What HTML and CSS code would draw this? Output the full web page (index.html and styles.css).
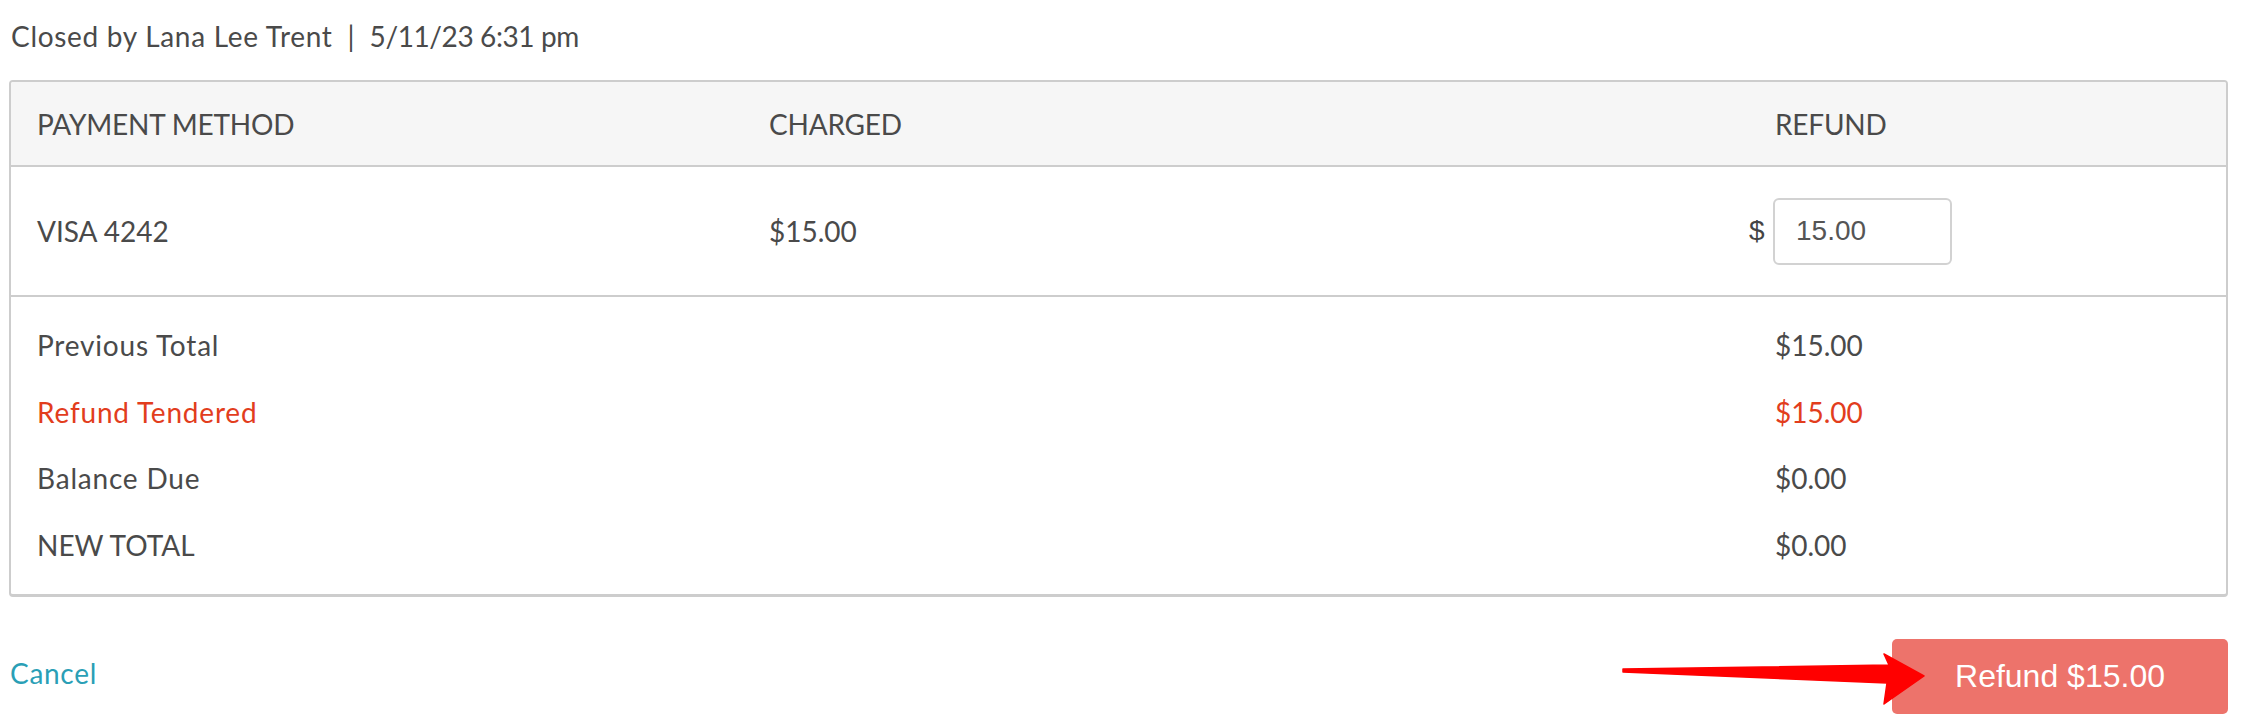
FILE: index.html
```html
<!DOCTYPE html>
<html lang="en">
<head>
<meta charset="utf-8">
<title>Refund</title>
<link rel="stylesheet" href="styles.css">
</head>
<body>
<div class="page">
  <p class="closed"><span class="who">Closed by Lana Lee Trent</span><span class="sep">|</span><span class="when">5/11/23 6:31 pm</span></p>

  <div class="panel">
    <div class="row head">
      <div class="cell">PAYMENT METHOD</div>
      <div class="cell">CHARGED</div>
      <div class="cell">REFUND</div>
    </div>
    <div class="row method">
      <div class="cell">VISA 4242</div>
      <div class="cell">$15.00</div>
      <div class="cell refund-cell">
        <span class="dollar">$</span>
        <input class="amount" type="text" value="15.00">
      </div>
    </div>
    <div class="totals">
      <div class="total-row"><span class="label">Previous Total</span><span class="value">$15.00</span></div>
      <div class="total-row red"><span class="label">Refund Tendered</span><span class="value">$15.00</span></div>
      <div class="total-row"><span class="label">Balance Due</span><span class="value">$0.00</span></div>
      <div class="total-row"><span class="label caps">NEW TOTAL</span><span class="value">$0.00</span></div>
    </div>
  </div>

  <div class="footer">
    <a class="cancel" href="#">Cancel</a>
    <button class="refund-btn" type="button">Refund $15.00</button>
  </div>
</div>

<svg class="arrow" width="310" height="60" viewBox="0 0 310 60" aria-hidden="true">
  <path d="M3,19 L269,15 L264,4 L304,26 L264,54 L267,33 L3,22 Z" fill="#ff0000" stroke="#ff0000" stroke-width="1.5" stroke-linejoin="round"/>
</svg>
</body>
</html>
```

FILE: styles.css
```css
html, body {
  margin: 0;
  padding: 0;
  background: #ffffff;
}

body {
  font-family: Lato, "Open Sans", "Noto Sans", sans-serif;
  color: #4a4a4a;
  font-size: 28px;
}

.page {
  margin: 0 14px 0 9px;
}

.closed {
  margin: 0;
  padding: 16px 0 0 2px;
  height: 64px;
  line-height: 40px;
  font-size: 28px;
  color: #4a4a4a;
}

.who {
  letter-spacing: 0.7px;
}

.when {
  letter-spacing: -0.4px;
}

.sep {
  margin: 0 15px;
}

.panel {
  border: 2px solid #cdcdcd;
  border-bottom-width: 3px;
  border-radius: 4px;
  overflow: hidden;
}

.row {
  display: grid;
  grid-template-columns: 732px 1006px 1fr;
  padding-left: 26px;
  align-items: center;
}

.row.head {
  background: #f6f6f6;
  height: 83px;
  border-bottom: 2px solid #cdcdcd;
  letter-spacing: -0.2px;
}

.row.method {
  height: 128px;
  border-bottom: 2px solid #cdcdcd;
}

.refund-cell {
  display: flex;
  align-items: center;
  margin-left: -26px;
}

.dollar {
  font-family: "Liberation Sans", Arial, sans-serif;
  font-size: 28px;
  color: #444;
  width: 24px;
}

.amount {
  box-sizing: border-box;
  width: 179px;
  height: 67px;
  border: 2px solid #d2d2d2;
  border-radius: 6px;
  padding: 0 0 0 21px;
  font-family: "Liberation Sans", Arial, sans-serif;
  font-size: 28px;
  color: #555;
  background: #fff;
  outline: none;
}

.totals {
  padding: 15px 0 16px 26px;
}

.total-row {
  display: grid;
  grid-template-columns: 1738px 1fr;
  height: 66.5px;
  align-items: center;
}

.label {
  letter-spacing: 0.8px;
}

.label.caps {
  letter-spacing: 0;
}

.total-row.red {
  color: #e23d1d;
}

.footer {
  display: flex;
  justify-content: space-between;
  align-items: center;
  margin-top: 42px;
}

.cancel {
  color: #2a9fb6;
  text-decoration: none;
  font-size: 28px;
  letter-spacing: 0.7px;
  margin: 0 0 8px 1px;
}

.refund-btn {
  width: 336px;
  height: 75px;
  border: none;
  border-radius: 5px;
  background: #ed736b;
  color: #ffffff;
  font-family: "Liberation Sans", Arial, sans-serif;
  font-size: 32px;
  padding: 0;
  cursor: pointer;
}

.arrow {
  position: absolute;
  left: 1620px;
  top: 650px;
}
```
